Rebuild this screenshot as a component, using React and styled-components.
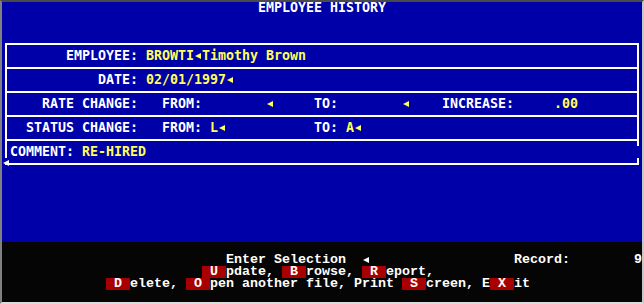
import React from "react";
import styled, { createGlobalStyle, css } from "styled-components";

const GlobalStyle = createGlobalStyle`
  html, body {
    margin: 0;
    padding: 0;
    background: #000;
  }
`;

const Screen = styled.div`
  width: 644px;
  height: 304px;
  box-sizing: border-box;
  border-top: 2px solid #4a4a4a;
  border-left: 2px solid #808080;
  border-right: 2px solid #c8c8c8;
  border-bottom: 2px solid #dcdcdc;
  display: flex;
  flex-direction: column;
  overflow: hidden;
`;

const BluePane = styled.div`
  height: 240px;
  background: #0000a8;
  display: flex;
  flex-direction: column;
  font-family: "DejaVu Sans Mono", "Liberation Mono", monospace;
  font-weight: bold;
  font-size: 13.3px;
  color: #ffffff;
`;

const Title = styled.div`
  height: 12px;
  line-height: 12px;
  text-align: center;
  white-space: pre;
`;

const Form = styled.div`
  margin: 29px 3px 0;
  display: flex;
  flex-direction: column;
`;

const Row = styled.div`
  position: relative;
  height: 22px;
  display: grid;
  grid-template-columns: repeat(78, 8px);
  align-items: center;
  padding-left: 3px;
  border-left: 2px solid #fff;
  border-right: 2px solid #fff;
  border-bottom: 2px solid #fff;
  ${({ $first }) => $first && css`border-top: 2px solid #fff;`}
  ${({ $open }) =>
    $open &&
    css`
      border-left: none;
      border-right: none;
      padding-left: 5px;
      background:
        linear-gradient(#fff, #fff) left top / 2px 17px no-repeat,
        linear-gradient(#fff, #fff) right top / 2px 5px no-repeat,
        linear-gradient(#fff, #fff) right bottom / 2px 5px no-repeat;
    `}
`;

const Cell = styled.span`
  grid-column: ${({ $col }) => $col} / span ${({ $span }) => $span || 1};
  white-space: pre;
  line-height: 22px;
  display: flex;
  align-items: center;
  color: ${({ $value }) => ($value ? "#ffff55" : "#ffffff")};
`;

/* the DOS 0x11 field-end marker, one character cell wide */
const Arrow = styled.span`
  display: inline-block;
  flex: none;
  width: 8px;
  height: 7px;
  position: relative;
  top: ${({ $nudge }) => $nudge || 0}px;
  vertical-align: middle;
  &::before {
    content: "";
    position: absolute;
    left: 1px;
    top: 0;
    border-top: 3.5px solid transparent;
    border-bottom: 3.5px solid transparent;
    border-right: 6px solid currentColor;
  }
`;

const EndArrow = styled.span`
  position: absolute;
  left: -2px;
  top: 19px;
  width: 0;
  height: 0;
  border-top: 3.5px solid transparent;
  border-bottom: 3.5px solid transparent;
  border-right: 6px solid #fff;
`;

const Menu = styled.div`
  flex: 1;
  background: #050505;
  padding-top: 12px;
  font-family: "Liberation Mono", "DejaVu Sans Mono", monospace;
  font-weight: bold;
  font-size: 13.333px;
  color: #ffffff;
`;

const MenuLine = styled.div`
  height: 12px;
  line-height: 12px;
  white-space: pre;
  display: ${({ $grid }) => ($grid ? "grid" : "block")};
  grid-template-columns: repeat(80, 8px);
  padding-left: ${({ $col }) => ($col || 0) * 8}px;
`;

const MenuCell = styled.span`
  grid-column: ${({ $col }) => $col} / span ${({ $span }) => $span || 1};
  white-space: pre;
  display: flex;
  align-items: center;
`;

const Key = styled.span`
  display: inline-block;
  width: 24px;
  height: 12px;
  text-align: center;
  background: #a80000;
  color: #fff;
`;

const A = <Arrow />;

const formRows = [
  [
    { col: 8, span: 9, text: "EMPLOYEE:" },
    { col: 18, span: 20, text: ["BROWTI", A, "Timothy Brown"], value: true },
  ],
  [
    { col: 12, span: 5, text: "DATE:" },
    { col: 18, span: 11, text: ["02/01/1997", A], value: true },
  ],
  [
    { col: 5, span: 12, text: "RATE CHANGE:" },
    { col: 20, span: 5, text: "FROM:" },
    { col: 33, span: 1, text: [A], value: true },
    { col: 39, span: 3, text: "TO:" },
    { col: 50, span: 1, text: [A], value: true },
    { col: 55, span: 9, text: "INCREASE:" },
    { col: 69, span: 3, text: ".00", value: true },
  ],
  [
    { col: 3, span: 14, text: "STATUS CHANGE:" },
    { col: 20, span: 5, text: "FROM:" },
    { col: 26, span: 2, text: ["L", A], value: true },
    { col: 39, span: 3, text: "TO:" },
    { col: 43, span: 2, text: ["A", A], value: true },
  ],
];

export default function App() {
  return (
    <>
      <GlobalStyle />
      <Screen>
        <BluePane>
          <Title>EMPLOYEE HISTORY</Title>
          <Form>
            {formRows.map((cells, i) => (
              <Row key={i} $first={i === 0}>
                {cells.map((c, j) => (
                  <Cell key={j} $col={c.col} $span={c.span} $value={c.value}>
                    {Array.isArray(c.text)
                      ? c.text.map((t, k) => <React.Fragment key={k}>{t}</React.Fragment>)
                      : c.text}
                  </Cell>
                ))}
              </Row>
            ))}
            <Row $open>
              <Cell $col={1} $span={8}>COMMENT:</Cell>
              <Cell $col={10} $span={8} $value>
                RE-HIRED
              </Cell>
              <EndArrow />
            </Row>
          </Form>
        </BluePane>
        <Menu>
          <MenuLine $grid>
            <MenuCell $col={29} $span={15}>Enter Selection</MenuCell>
            <MenuCell $col={46}>
              <Arrow />
            </MenuCell>
            <MenuCell $col={65} $span={7}>Record:</MenuCell>
            <MenuCell $col={80}>9</MenuCell>
          </MenuLine>
          <MenuLine $col={25}>
            <Key>U</Key>pdate, <Key>B</Key>rowse, <Key>R</Key>eport,
          </MenuLine>
          <MenuLine $col={13}>
            <Key>D</Key>elete, <Key>O</Key>pen another file, Print{" "}
            <Key>S</Key>creen, E<Key>X</Key>it
          </MenuLine>
        </Menu>
      </Screen>
    </>
  );
}
